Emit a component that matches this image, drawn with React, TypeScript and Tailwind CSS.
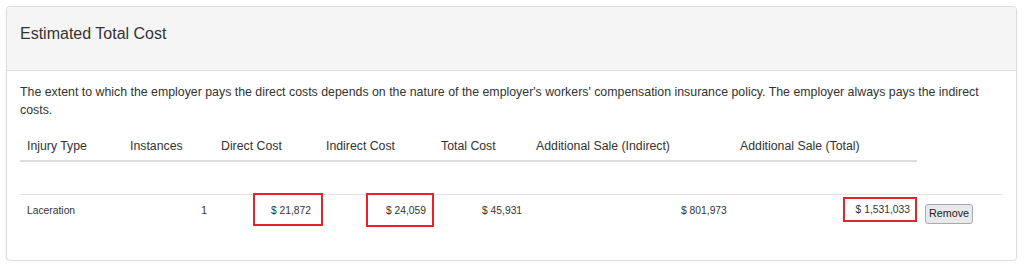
import React from "react";

const columns = [
  { label: "Injury Type", width: "w-[103px]" },
  { label: "Instances", width: "w-[91px]" },
  { label: "Direct Cost", width: "w-[105px]" },
  { label: "Indirect Cost", width: "w-[115px]" },
  { label: "Total Cost", width: "w-[95px]" },
  { label: "Additional Sale (Indirect)", width: "w-[204px]" },
  { label: "Additional Sale (Total)", width: "w-[184px]" },
];

export default function App() {
  return (
    <div className="bg-white pt-[6px] pl-[6px] pr-[7px] font-['Liberation_Sans',Arial,sans-serif] text-[#333]">
      <div className="rounded-[4px] border border-[#ddd] shadow-[0_1px_2px_rgba(0,0,0,0.08)]">
        {/* heading */}
        <div className="h-[64px] rounded-t-[4px] border-b border-[#ddd] bg-[#f5f5f5] px-[13px] pt-[17px]">
          <h3 className="text-[16px] leading-[20px]">Estimated Total Cost</h3>
        </div>

        <div className="px-[13px] pt-[12px] pb-[34px]">
          <p className="text-[12.35px] leading-[18px]">
            The extent to which the employer pays the direct costs depends on the nature of the
            employer's workers' compensation insurance policy. The employer always pays the indirect
            costs.
          </p>

          {/* table head */}
          <div className="flex h-[43px] w-[897px] items-end border-b-2 border-[#ddd] pb-[5px] text-[12.3px] leading-[18px]">
            {columns.map((c) => (
              <div key={c.label} className={`${c.width} pl-[7px]`}>
                {c.label}
              </div>
            ))}
          </div>

          <div className="mt-[32px] border-t border-[#e3e3e3]" />

          {/* row */}
          <div className="-mt-[2px] flex h-[33px] items-center pt-[2px] text-[10.3px]">
            <div className="w-[140px] pl-[7px]">Laceration</div>
            <div className="w-[54px] pr-[7px] text-right">1</div>
            <div className="ml-[39px] -mt-[2px] flex h-[33px] w-[70px] items-center justify-end border-2 border-[#e4232b] pr-[10px] pt-[2px]">
              $ 21,872
            </div>
            <div className="ml-[43px] -mt-[2px] flex h-[34px] w-[68px] items-center justify-end border-2 border-[#e4232b] pr-[6px] pt-[2px]">
              $ 24,059
            </div>
            <div className="ml-[48px] w-[199px]">$ 45,931</div>
            <div className="w-[162px]">$ 801,973</div>
            <div className="-mt-[2px] flex h-[25px] w-[74px] items-center justify-end border-2 border-[#e4232b] pr-[5px] pt-[1px]">
              $ 1,531,033
            </div>
            <button className="ml-[8px] mt-[6px] h-[20px] w-[48px] rounded-[3px] border border-[#a9a9a9] bg-[#e9e9ed] text-[10.8px] leading-none text-[#222]">
              Remove
            </button>
          </div>
        </div>
      </div>
    </div>
  );
}
